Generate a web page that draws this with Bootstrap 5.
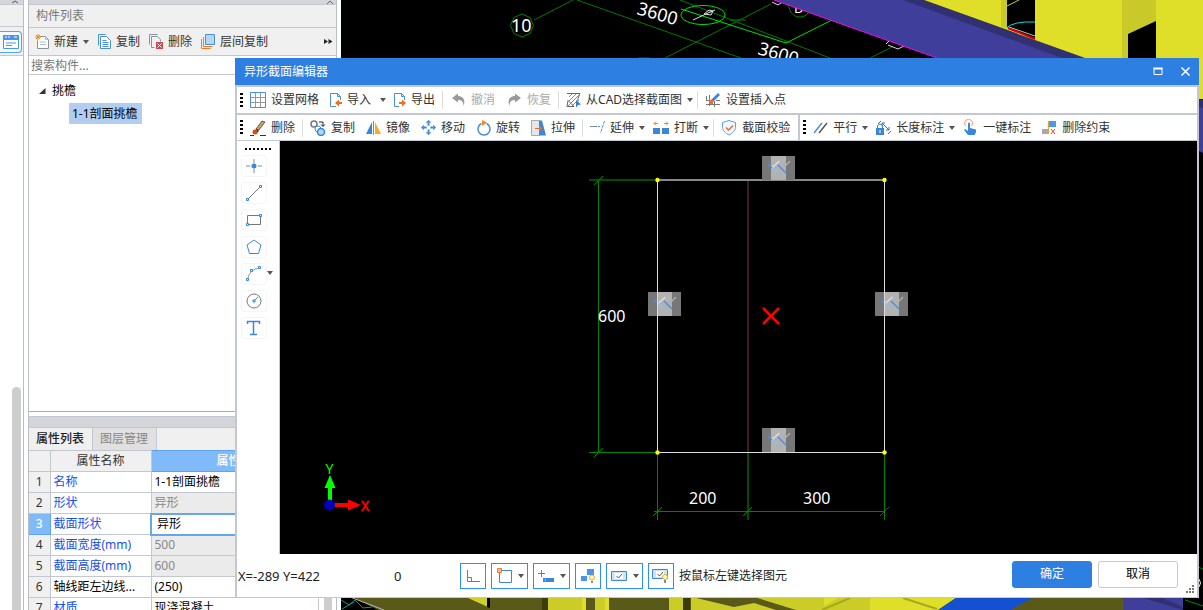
<!DOCTYPE html>
<html lang="zh-CN">
<head>
<meta charset="utf-8">
<meta name="viewport" content="width=device-width, initial-scale=1">
<title>异形截面编辑器</title>
<link href="https://cdn.jsdelivr.net/npm/bootstrap@5.3.0/dist/css/bootstrap.min.css" rel="stylesheet">
<style>
  :root { --line:#c3c7d0; --blue:#2d80e2; --icon:#4a8fd8; --face:#f0f0f0; }
  body { font:12px/18px "Noto Sans","Noto Sans CJK SC",sans-serif; color:#222; background:#fff; }
  button, input { font:inherit; }
  svg { display:block; flex:none; }
  .app { height:100vh; overflow:hidden; position:relative; }
  .rail { width:24px; border-right:1px solid #b9bdc4; background:#fff; }
  .strip { height:5px; background:#d4d5da; border-bottom:1px solid var(--line); }
  .rail-head { height:51px; background:var(--face); border-bottom:1px solid var(--line); }
  .rail-line { height:22px; border-bottom:1px solid var(--line); }
  .rail-btn { width:22px; height:22px; margin-top:4px; padding:0 0 0 3px; border:1px solid #58a0f0; border-left:0; border-radius:0 4px 4px 0; background:#f4f9ff; }
  .rail-thumb { width:9px; margin:331px 0 0 12px; border-radius:5px 5px 0 0; background:#cdcdcd; }
  .dock { width:309px; border:solid #b9bdc4; border-width:0 1px; }
  .dock > * { flex-shrink:0; }
  .dock-title { height:23px; padding:0 7px; background:var(--face); border-bottom:1px solid var(--line); color:#777; }
  .dock-tools { height:28px; padding:0 3px 0 6px; background:var(--face); border-bottom:1px solid var(--line); gap:9px; }
  .tool { display:flex; align-items:center; gap:5px; border:0; padding:0; background:none; color:#333; white-space:nowrap; }
  .caret { border:3px solid transparent; border-top:4px solid #555; border-bottom:0; }
  .search { height:19px; border:0; border-bottom:1px solid var(--line); padding:0 2px; color:#222; outline:0; }
  .search::placeholder { color:#777; opacity:1; }
  .tree { height:337px; padding-top:5px; border-bottom:1px solid #aaa; color:#000; }
  .tree-row { padding-left:10px; height:21px; gap:6px; }
  .tree-item { height:21px; line-height:21px; margin:2px 0 0 40px; padding:0 4px 0 3px; background:#b3cdf0; }
  .dock-strip { height:12px; margin-top:4px; background:#d4d5da; border:1px solid var(--line); border-width:1px 0; }
  .tabs { height:22px; background:var(--face); }
  .tabs button { border:0; border-right:1px solid var(--line); padding:0 8px 0 7px; background:#e0e0e0; color:#888; }
  .tabs button.on { background:var(--face); color:#222; font-weight:500; }
  .props { width:290px; table-layout:fixed; border-collapse:collapse; line-height:18px; }
  .props th, .props td { height:21px; padding:0 3px; border:1px solid var(--line); font-weight:400; white-space:nowrap; overflow:hidden; }
  .props th { background:var(--face); text-align:center; color:#333; }
  .props tr > :first-child { border-left:0; }
  .props td:nth-child(2) { color:#1550f0; }
  .props td:nth-child(3) { color:#000; }
  .props tr.ro td:nth-child(3) { background:#ebebeb; color:#888; }
  .props th.hot { background:#80baf9; color:#fff; font-weight:500; border-color:#60a2ec; }
  .props tr td.editing { border:2px solid #66a6ec; padding-left:5px; }
  .props tr td.plain { color:#000; }
  .track { width:17px; padding:0 4px 0 5px; }
  .track div { background:#cdcdcd; height:100%; }
  .view3d { min-width:0; background:#000; margin-left:4px; }
  .dialog { position:absolute; left:235px; right:4px; top:58px; bottom:12px; background:#fff; border:solid var(--line); border-width:0 2px 1px; }
  .dlg-title { height:27px; margin:0 -2px; padding:0 6px 0 9px; background:var(--blue); color:#fff; }
  .dlg-title button { width:12px; height:18px; padding:0; border:0; background:none; color:#fff; }
  .bar { height:28px; border-top:2px solid var(--line); padding:0 3px; }
  .bar.last { border-bottom:1px solid var(--line); }
  .bar .tool { height:22px; padding:0 4px; margin-right:3px; }
  .bar .tool.drop { padding-right:1px; }
  .bar .tool:disabled { color:#aaa; }
  .grip { width:3px; height:15px; margin-right:3px; background:repeating-linear-gradient(#000 0 2px,transparent 2px 4px); }
  .sep { width:1px; height:18px; background:#ddd; margin-right:3px; }
  .split { width:2px; height:100%; background:var(--line); margin:0 3px 0 1px; }
  .palette { width:43px; border-right:1px solid var(--line); padding:7px 0 0 4px; }
  .palette .dots { width:26px; height:2px; margin:0 0 5px 4px; background:repeating-linear-gradient(90deg,#000 0 2px,transparent 2px 4px); }
  .palette button { width:26px; height:22px; margin-bottom:5px; padding:0; border:1px solid #f5f5f5; border-radius:3px; background:none; display:flex; align-items:center; justify-content:center; }
  .stage { min-width:0; background:#000; }
  .status { height:43px; padding-left:1px; color:#222; }
  .coord { font-size:13px; width:156px; }
  .count { font-size:13px; width:66px; }
  .snap { height:26px; min-width:26px; margin-right:5px; padding:0 3px; border:1px solid #2a90f8; background:#fff; display:flex; align-items:center; justify-content:center; gap:5px; }
  .snap.wide { min-width:37px; }
  .act { width:80px; height:27px; border-radius:3px; padding:0; font-size:12px; line-height:18px; margin:0 6px 3px 0; }
  .act.ok { background:var(--blue); border:1px solid var(--blue); color:#fff; }
  .act.no { background:#fff; border:1px solid #c8c8c8; color:#000; }
  .sizer { align-self:flex-end; margin:0 2px 3px 2px; }
</style>
</head>
<body>
<div class="app d-flex">

  <aside class="rail d-flex flex-column flex-shrink-0">
    <div class="strip"><svg width="24" height="4"><path d="M12 3l3-2 3 2" stroke="#555" fill="none"/></svg></div>
    <div class="rail-head">
      <div class="rail-line"></div>
      <button class="rail-btn" aria-label="面板"><svg width="16" height="14"><path d="M.5.5h15v13H.5z" fill="#fff" stroke="#4a94ee"/><path d="M0 0h16v5H0z" fill="#4a94ee"/><path d="M2 2h2M5 2h2M11 2h3" stroke="#fff"/><path d="M3 8h10M3 10.500h6" stroke="#4a94ee"/></svg></button>
    </div>
    <div class="rail-thumb flex-grow-1"></div>
  </aside>

  <aside class="dock d-flex flex-column flex-shrink-0 ms-1">
    <div class="strip"><svg class="ms-auto" width="12" height="4"><path d="M3 4l3-3 3 3" stroke="#666" fill="none"/></svg></div>
    <div class="dock-title d-flex align-items-center">构件列表</div>
    <div class="dock-tools d-flex align-items-center">
      <button class="tool"><svg width="14" height="15"><path d="M4.500 2.500h6l3 3v9h-11v-8" fill="#fff" stroke="#8a939c"/><path d="M10.500 2.500v3h3M5 8h6M5 10.500h6" stroke="#b5bbc2" fill="none"/><path d="M3 0v6M0 3h6M1 1l4 4M5 1l-4 4" stroke="#f08a1c"/></svg>新建<span class="caret"></span></button>
      <button class="tool"><svg width="13" height="15"><path d="M.5 11.500V.5h7" fill="none" stroke="#4a8fd8"/><path d="M2.500 2.500h6l4 4v8h-10z" fill="#fff" stroke="#4a8fd8"/><path d="M4.500 6.500h4M4.500 8.500h6M4.500 10.500h6M4.500 12.500h6" stroke="#4a8fd8"/></svg>复制</button>
      <button class="tool"><svg width="14" height="15"><path d="M.5 10.500V.5h8M2.500 13.500v-11h6l3 3v2M2.500 13.500h3" fill="none" stroke="#8a939c"/><path d="M7 8h7v7H7z" fill="#d9434b"/><path d="M8.500 9.500l4 4M12.500 9.500l-4 4" stroke="#fff"/></svg>删除</button>
      <button class="tool"><svg width="14" height="15"><path d="M.5 5v9.500h9M2.500 3v9.500h9" fill="none" stroke="#f07a2c"/><path d="M4.500.5h9v10h-9z" fill="#b4d4f8" stroke="#4a8fd8"/></svg>层间复制</button>
      <button class="tool ms-auto" aria-label="更多"><svg width="9" height="7"><path d="M0 1l4 2.500L0 6zM4.500 1l4 2.500-4 2.500z" fill="#222"/></svg></button>
    </div>
    <input class="search" type="text" placeholder="搜索构件..." aria-label="搜索构件">
    <div class="tree">
      <div class="tree-row d-flex align-items-center"><svg width="7" height="6"><path d="M6.500 0v6H0z" fill="#333"/></svg>挑檐</div>
      <div class="d-flex"><div class="tree-item">1-1剖面挑檐</div></div>
    </div>
    <div class="dock-strip"></div>
    <div class="tabs d-flex"><button class="on">属性列表</button><button>图层管理</button></div>
    <div class="d-flex">
      <table class="props">
        <colgroup><col style="width:21px"><col style="width:101px"><col></colgroup>
        <thead><tr><th></th><th>属性名称</th><th class="hot">属性值</th></tr></thead>
        <tbody>
          <tr><th>1</th><td>名称</td><td>1-1剖面挑檐</td></tr>
          <tr class="ro"><th>2</th><td>形状</td><td>异形</td></tr>
          <tr><th class="hot">3</th><td>截面形状</td><td class="editing">异形</td></tr>
          <tr class="ro"><th>4</th><td>截面宽度(mm)</td><td>500</td></tr>
          <tr class="ro"><th>5</th><td>截面高度(mm)</td><td>600</td></tr>
          <tr><th>6</th><td class="plain">轴线距左边线...</td><td>(250)</td></tr>
          <tr><th>7</th><td>材质</td><td>现浇混凝土</td></tr>
        </tbody>
      </table>
      <div class="track"><div></div></div>
    </div>
  </aside>

  <main class="view3d flex-grow-1">
    <svg width="100%" height="100%" viewBox="341 0 862 610" preserveAspectRatio="xMinYMin slice" font-family="Noto Sans" fill="none">
      <path d="M534 20L573 0M577 0L741 58M665 58L771 4M680 0L830 58M870 58l22-11" stroke="#007800"/>
      <path d="M681 9l105 34 46-23M836 22l5-1" stroke="#00e000"/>
      <path d="M522 14l8 3.500 3.500 8-3.500 8-8 3.500-8-3.500-3.500-8 3.500-8zM788 0c0 10 4 17 12 17s11-8 9-13M638 58h12M730 20h16" stroke="#008200"/>
      <ellipse cx="703" cy="15" rx="22" ry="9.500" stroke="#00e000"/>
      <path d="M693 20l15-7 7-3M704 14l5-4 4 1-2 4zM772 2l6 3 6-4M886 44l4-4 5 1M888 45l10 4 8-4" stroke="#ddd"/>
      <g fill="#fff" font-size="18"><text x="511" y="32">10</text><text transform="translate(636 14) rotate(16)">3600</text><text transform="translate(757 54) rotate(16)">3600</text><text font-size="13" x="794" y="13">D</text></g>
      <path d="M774 0L937 58h148L905 0z" fill="#3f3f9b"/>
      <path d="M774 0L937 58" stroke="#f0e"/>
      <path d="M903 0h21l162 58h-24z" fill="#303072"/>
      <path d="M924 0h279v99h-4V58h-114z" fill="#dfdf2a"/>
      <path d="M1001 0h6v28l-6-1z" fill="#c9c92a"/>
      <path d="M1007 0h28v39l-28-12z" fill="#000"/>
      <path d="M1006 28q8-7 29-6" stroke="#0dd"/><path d="M1008 28l27 11" stroke="#e00000" stroke-width="2"/><path d="M1009 27l26 9" stroke="#bbb"/><path d="M1007 6l12-6" stroke="#cccc28"/>
      <path d="M1122 0h34v21l-28 14v23h-6z" fill="#c9c92a"/><path d="M1128 34l28-13v37h-28z" fill="#000"/>
      <path d="M1199 99l4 1v8l-4-2z" fill="#303072"/><path d="M1199 106l4 2v45l-4-2z" fill="#3f3f9b"/>
      <path d="M1198 567l5 2M1185 600l18 6" stroke="#008000"/><path d="M1199 579q3 4 0 8" stroke="#eee"/>
      <path d="M353 597h770v13H378z" fill="#59591a"/>
      <path d="M350 597l34 13" stroke="#bbb"/><path d="M341 600l8 5 6-5 8 8 9-1M342 609l12-7" stroke="#0a9a8a"/>
      <path d="M468 598h20v9z" fill="#d0d02a"/><path d="M487 597h3v11l-3-1z" fill="#000"/>
      <path d="M548 597h34v13h-34zM595 597h10v13h-10zM669 597h14v13h-14zM691 597h246v13H691z" fill="#cccc28"/>
      <path d="M582 597h4v13h-4zM605 597h4v13h-4zM824 597h16l-16 9zM870 597h88l-20 13h-68z" fill="#dfdf2a"/>
      <path d="M692 597h62l42 13h-20l-22-7-20 4z" fill="#59591a"/><path d="M542 597h6v13h-6zM683 597h7v13h-7z" fill="#3c3c0a"/>
      <path d="M903 598l34 11M822 610l28-12" stroke="#a8a820" stroke-width="2"/>
      <path d="M957 597h77l-24 13h-72z" fill="#1450d0"/><path d="M1123 597h60v13h-60z" fill="#3f3f9b"/><path d="M1140 597h20l23 10v3z" fill="#303072"/>
    </svg>
  </main>

  <section class="dialog d-flex flex-column" role="dialog" aria-label="异形截面编辑器">
    <header class="dlg-title d-flex align-items-center flex-shrink-0">
      <span class="me-auto">异形截面编辑器</span>
      <button class="me-3" aria-label="最大化"><svg width="10" height="9"><path d="M1 1.500h8v6H1z" fill="none" stroke="#fff"/><path d="M.5 1.500h9" stroke="#fff" stroke-width="2"/></svg></button>
      <button aria-label="关闭"><svg width="9" height="9"><path d="M.5.5l8 8M8.500.5l-8 8" stroke="#fff" stroke-width="1.500"/></svg></button>
    </header>

    <div class="bar d-flex align-items-center flex-shrink-0">
      <span class="grip"></span>
      <button class="tool"><svg width="16" height="16"><path d="M5.500 1v14M10.500 1v14M1 5.500h14M1 10.500h14" stroke="#999"/><path d="M.5.5h15v15H.5z" fill="none" stroke="#4a8fd8"/></svg>设置网格</button>
      <button class="tool drop"><svg width="12" height="16"><path d="M6 14.500H.5V1.500h7l3 3V8M7.500 1.500v3h3" fill="none" stroke="#4a8fd8"/><path d="M5 11l4-3.500v2.500h3v2h-3v2.500z" fill="#f36b21"/></svg>导入<span class="caret ms-1"></span></button>
      <button class="tool"><svg width="12" height="16"><path d="M5 14.500H.5V1.500h7l3 3V8M7.500 1.500v3h3" fill="none" stroke="#4a8fd8"/><path d="M12 11L8 7.500V10H5v2h3v2.500z" fill="#f36b21"/></svg>导出</button>
      <span class="sep"></span>
      <button class="tool" disabled><svg width="16" height="14"><path d="M2 5l6-4.500V3c5 0 8 4 5.500 10C13.500 9 12 7 8 7v2.500z" fill="#999"/></svg>撤消</button>
      <button class="tool" disabled><svg width="16" height="14"><path d="M15 5L9 .5V3C4 3 1 7 3.500 13 3.500 9 5 7 9 7v2.500z" fill="#999"/></svg>恢复</button>
      <span class="sep"></span>
      <button class="tool drop"><svg width="15" height="16"><path d="M1 1.500h13l-2 5v3M8 14.500H1l1-6z" fill="none" stroke="#666"/><path d="M3 5l3-3M3 9l7-7M2 14L13 3M6 14l6-6" stroke="#888"/><path d="M10 8l5 4.500-3 .5-2 2.500z" fill="#2e7fd8"/></svg>从CAD选择截面图<span class="caret"></span></button>
      <span class="sep"></span>
      <button class="tool"><svg width="16" height="16"><path d="M4.500 3v11M1 12.500h14M9.500 9v6M1 8.500h4M11 8.500h4M1.500 4v5" stroke="#777"/><path d="M6 8l7-7 2 2-7 7z" fill="#3c86de"/><path d="M4 8h4v4H4z" fill="#f36b21"/></svg>设置插入点</button>
    </div>

    <div class="bar last d-flex align-items-center flex-shrink-0">
      <span class="grip"></span>
      <button class="tool"><svg width="16" height="16"><path d="M6 9l6-8 3 1-6 8z" fill="#caa068" stroke="#333" stroke-width=".7"/><path d="M3 11l4-2 2 2-3 3z" fill="#333"/><circle cx="5" cy="12" r="2.500" fill="#e04a10"/><path d="M0 15.500h4M10 15.500h6" stroke="#333"/></svg>删除</button>
      <span class="sep"></span>
      <button class="tool"><svg width="16" height="16"><circle cx="4" cy="4" r="3" fill="#fff" stroke="#777" stroke-width="1.500"/><circle cx="8" cy="9" r="3" fill="#fff" stroke="#4a8fd8"/><circle cx="11" cy="12" r="3.500" fill="#b4d8f8" stroke="#2e86d8" stroke-width="1.500"/><path d="M9 2h4v4M11 4.500l2 2 2-2" fill="none" stroke="#222"/></svg>复制</button>
      <button class="tool"><svg width="15" height="16"><path d="M6 2v12H0z" fill="#3c86d8"/><path d="M9 2v12h6z" fill="#ffab19"/><path d="M7.500 1v14" stroke="#888"/></svg>镜像</button>
      <button class="tool"><svg width="15" height="15" viewBox="0 0 16 16"><path d="M8 0l3 3H5zM8 16l3-3H5zM0 8l3-3v6zM16 8l-3-3v6z" fill="#3c86d8"/><path d="M8 3v3M8 10v3M3 8h3M10 8h3" stroke="#3c86d8" stroke-width="2"/></svg>移动</button>
      <button class="tool"><svg width="15" height="16"><path d="M10.500 3.500a6 6 0 1 1-5 0" fill="none" stroke="#4a8fd8" stroke-width="1.500"/><path d="M6 0l5 2.500L6 6z" fill="#f08a1c"/></svg>旋转</button>
      <button class="tool"><svg width="15" height="16"><path d="M.5.5h8v15h-8z" fill="#e4e6ea" stroke="#aaa"/><path d="M8 .5h3l4 15H8z" fill="#3c86d8"/><path d="M4 8.500h5" stroke="#f36b21"/><path d="M8 5.500l3.500 3L8 11.500z" fill="#f36b21"/></svg>拉伸</button>
      <span class="sep"></span>
      <button class="tool drop"><svg width="15" height="14"><path d="M0 5.500h5" stroke="#888"/><path d="M5 5.500h6" stroke="#4a8fd8" stroke-dasharray="2 1"/><path d="M14.500 0l-4 12" stroke="#4a8fd8" stroke-dasharray="3 1"/></svg>延伸<span class="caret"></span></button>
      <button class="tool drop"><svg width="16" height="14"><path d="M0 7h7v6H0zM9 7h7v6H9z" fill="#3c86d8"/><path d="M1 2.500h4M11 2.500h4M3 .5L1 2.500l2 2M13 .5l2 2-2 2" fill="none" stroke="#f08a1c"/></svg>打断<span class="caret"></span></button>
      <span class="sep"></span>
      <button class="tool"><svg width="16" height="16"><path d="M8 .5l6.500 2v5c0 3-3.500 6-6.500 7.500-3-1.500-6.500-4.500-6.500-7.500v-5z" fill="#f2f8ff" stroke="#5b9be0"/><path d="M5 7.500l2.500 2.500L12 5.500" fill="none" stroke="#f36b21" stroke-width="1.500"/></svg>截面校验</button>
      <span class="split"></span>
      <span class="grip"></span>
      <button class="tool drop"><svg width="15" height="12"><path d="M1 11L9 1" stroke="#4a8fd8" stroke-width="1.500"/><path d="M6 11l8-10" stroke="#555" stroke-width="1.500"/></svg>平行<span class="caret"></span></button>
      <button class="tool drop"><svg width="15" height="16"><path d="M0 8h8v7H0z" fill="#3c86d8"/><path d="M1.500 8V5.500q2.500-3 5 0V8" fill="none" stroke="#3c86d8"/><path d="M4 10v3" stroke="#fff"/><path d="M6 3l7 7M6 6V3h3M13 7v3h-3" fill="none" stroke="#2e76c8"/><path d="M2 4l3-3M12 14l3-3" stroke="#666"/></svg>长度标注<span class="caret"></span></button>
      <button class="tool"><svg width="15" height="17"><path d="M2.500 7a4 4 0 1 1 6 0" fill="none" stroke="#f59a70"/><path d="M5 4.500q1-2 2 0V9l6 1.500v3L11.500 16H5l-4-5 1-1 3 2z" fill="#3c86d8"/></svg>一键标注</button>
      <button class="tool"><svg width="15" height="14"><path d="M7 0h7v6H7z" fill="#4a98f0"/><path d="M0 8h6v5H0z" fill="#a0a8b0"/><path d="M6.500 0v13" stroke="#f0a030"/><path d="M9 8l4 5M13 8l-4 5" stroke="#e04040"/></svg>删除约束</button>
    </div>

    <div class="d-flex flex-grow-1 overflow-hidden">
      <nav class="palette flex-shrink-0" aria-label="绘图工具">
        <div class="dots"></div>
        <button aria-label="点"><svg width="16" height="16"><path d="M8 1v4M8 11v4M0 8h4M12 8h4" stroke="#888"/><circle cx="8" cy="8" r="2.500" fill="#3c86e0"/></svg></button>
        <button aria-label="直线"><svg width="16" height="16"><path d="M2 14L14 2" stroke="#777"/><path d="M.5 13.500h2v2h-2zM13.500.5h2v2h-2z" fill="#fff" stroke="#2e86e0"/></svg></button>
        <button aria-label="矩形"><svg width="16" height="12"><path d="M1.500 1.500h13v9h-13z" fill="none" stroke="#777"/><path d="M.5 9.500h2v2h-2zM13.500.5h2v2h-2z" fill="#fff" stroke="#2e86e0"/></svg></button>
        <button aria-label="多边形"><svg width="16" height="16"><path d="M8 1l7 5-2.500 8.500h-9L1 6z" fill="none" stroke="#3c86d8"/></svg></button>
        <div class="d-flex">
          <button aria-label="圆弧"><svg width="16" height="16"><path d="M1.500 14Q3 3 14 2" fill="none" stroke="#999"/><path d="M.5 12.500h2v2h-2zM12.500.5h2v2h-2zM4.500 3.500h2v2h-2z" fill="#fff" stroke="#2e86e0"/></svg></button>
          <span class="caret mt-2"></span>
        </div>
        <button aria-label="圆"><svg width="16" height="16"><circle cx="8" cy="8" r="7" fill="none" stroke="#777"/><path d="M8 8l4-4" stroke="#4a8fd8"/><path d="M7 7h2v2H7z" fill="#fff" stroke="#2e86e0"/></svg></button>
        <button aria-label="文字"><svg width="16" height="16"><path d="M1.500 4V1.500h12V4M7.500 1.500v13M4 14.500h7" fill="none" stroke="#3c86d8" stroke-width="1.500"/></svg></button>
      </nav>
      <div class="stage flex-grow-1">
        <svg width="100%" height="100%" viewBox="280 141 917 413" fill="none" font-family="Noto Sans">
          <defs>
            <g id="constraint"><path d="M0 0h33v24H0z" fill="#777"/><path d="M9 0h15v24H9z" fill="#b2b2b2"/><path d="M9.500 12l8-7" stroke="#ddd" stroke-width="1.500"/><path d="M22 11l6-6" stroke="#a8b0b8" stroke-width="1.500"/><path d="M6 8l4 4M16 9l8 8" stroke="#4a90e0" stroke-width="1.500"/><path d="M10 12l5 5" stroke="#90c0f0" stroke-width="1.500"/></g>
          </defs>
          <path d="M748 180v272" stroke="#3c1d1d" stroke-width="2"/>
          <path d="M589 180h68M748 453v67" stroke="#004c00" stroke-width="2"/>
          <path d="M598.500 180v272M589 452.500h68M657.500 453v67M884.500 453v67M654 511.500h231M594 185l9-9M594 457l9-9M653 516l9-9M743 516l9-9M880 516l9-9" stroke="#008400"/>
          <path d="M657 180h228" stroke="#888" stroke-width="2"/>
          <use href="#constraint" x="762" y="156"/><use href="#constraint" x="648" y="292"/><use href="#constraint" x="875" y="292"/><use href="#constraint" x="762" y="428"/>
          <path d="M657.500 180v272.500h227V180" stroke="#ddd"/>
          <g fill="#ff0"><circle cx="657.500" cy="180" r="2.200"/><circle cx="884.500" cy="180" r="2.200"/><circle cx="657.500" cy="452.500" r="2.200"/><circle cx="884.500" cy="452.500" r="2.200"/></g>
          <path d="M763 308l16 16M779 308l-16 16" stroke="#f00" stroke-width="2.500"/>
          <g fill="#fff" font-size="16"><text x="598" y="322">600</text><text x="689" y="504">200</text><text x="803" y="504">300</text></g>
          <path d="M330 502v-14" stroke="#0f0" stroke-width="4"/><path d="M330 475l5.500 13h-11z" fill="#0f0"/>
          <path d="M333 505h15" stroke="#f00" stroke-width="4"/><path d="M361 505l-13-5.500v11z" fill="#f00"/>
          <circle cx="329.500" cy="505" r="5.500" fill="#0000b8"/>
          <g font-size="14"><text x="325.500" y="474" fill="#0f0">Y</text><text x="361" y="511" fill="#f00" stroke="#f00" stroke-width=".5">X</text></g>
        </svg>
      </div>
    </div>

    <footer class="status d-flex align-items-center flex-shrink-0">
      <span class="coord">X=-289 Y=422</span>
      <span class="count">0</span>
      <button class="snap" aria-label="正交"><svg width="16" height="16"><path d="M2.500 2v11.500H15M2.500 9.500h4v4" fill="none" stroke="#3c86d8"/></svg></button>
      <button class="snap wide" aria-label="捕捉"><svg width="17" height="17"><path d="M3.500 3.500h12v12h-12z" fill="none" stroke="#3c86d8"/><path d="M1.500 1.500h4v4h-4z" fill="#f8b890" stroke="#f07a3c"/></svg><span class="caret"></span></button>
      <button class="snap wide" aria-label="动态输入"><svg width="18" height="16"><path d="M4.500 2v7M1 5.500h7" stroke="#3c86d8"/><path d="M6 10h11v4H6z" fill="#3c86d8"/><path d="M8 12h1" stroke="#fff"/></svg><span class="caret"></span></button>
      <button class="snap" aria-label="显示约束"><svg width="16" height="16"><path d="M7 1h7v6H7v6H1V8h6z" fill="#4a94ea"/><circle cx="12" cy="9.500" r="2.500" fill="#fff3c0" stroke="#f0b020"/><path d="M11 13h2v2h-2z" fill="#888"/></svg></button>
      <button class="snap wide" aria-label="显示尺寸"><svg width="17" height="10"><path d="M.5.5h15v9H.5z" fill="#cfe3f8" stroke="#3c86d8"/><path d="M4 2h8v6H4z" fill="#fff"/><path d="M5.500 5l2 2 3.500-4" fill="none" stroke="#555"/></svg><span class="caret"></span></button>
      <button class="snap" aria-label="显示提示"><svg width="18" height="16"><path d="M.5 1.500h15v9H.5z" fill="#cfe3f8" stroke="#3c86d8"/><path d="M4 3h8v6H4z" fill="#fff"/><path d="M5.500 6l2 2L11 4" fill="none" stroke="#555"/><circle cx="13" cy="9" r="2.500" fill="#fff3c0" stroke="#f0b020"/><path d="M12 12h2v3h-2z" fill="#888"/></svg></button>
      <span class="me-auto">按鼠标左键选择图元</span>
      <button class="act ok">确定</button>
      <button class="act no">取消</button>
      <svg class="sizer" width="9" height="9"><path d="M6 0h2v2H6zM6 3h2v2H6zM6 6h2v2H6zM3 3h2v2H3zM3 6h2v2H3zM0 6h2v2H0z" fill="#777"/></svg>
    </footer>
  </section>
</div>
<script src="https://cdn.jsdelivr.net/npm/bootstrap@5.3.0/dist/js/bootstrap.bundle.min.js"></script>
</body>
</html>
